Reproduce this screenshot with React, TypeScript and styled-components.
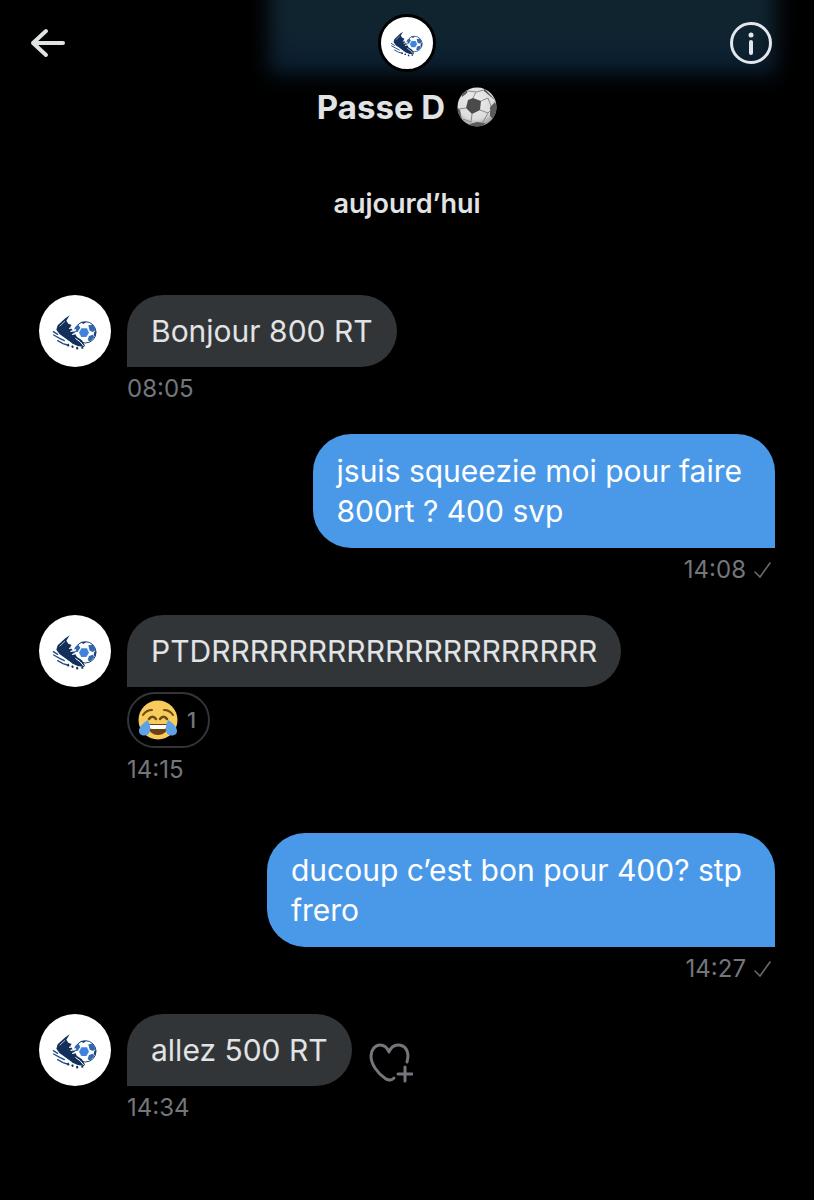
import React from 'react';
import styled, { createGlobalStyle } from 'styled-components';

type Side = 'in' | 'out';

interface ChatMessage {
  id: number;
  side: Side;
  text: string;
  time: string;
  reaction?: number;
  canReact?: boolean;
}

const messages: ChatMessage[] = [
  { id: 1, side: 'in', text: 'Bonjour 800 RT', time: '08:05' },
  { id: 2, side: 'out', text: 'jsuis squeezie moi pour faire\n800rt ? 400 svp', time: '14:08' },
  { id: 3, side: 'in', text: 'PTDRRRRRRRRRRRRRRRRRRRR', time: '14:15', reaction: 1 },
  { id: 4, side: 'out', text: 'ducoup c’est bon pour 400? stp\nfrero', time: '14:27' },
  { id: 5, side: 'in', text: 'allez 500 RT', time: '14:34', canReact: true },
];

const ClubLogo = () => (
  <svg viewBox="27 30 216 216" aria-hidden="true">
    <circle cx="166" cy="142" r="32" fill="#fff" stroke="#1d3f70" strokeWidth="3" />
    <path d="M154 130h17l6 13-8 13h-15l-7-13z" fill="#3f83dc" />
    <path d="M134 127l11-8 6 9-8 13-9-1zM175 121l14-2 8 15-8 7-10-4zM177 153l12-4 4 7-13 14-7-5z" fill="#3168b4" />
    <path d="M151 111h18l-9 6zM193 140l6-2-3 17-5-5z" fill="#1d3f70" />
    <path
      d="M119 91l-13 9-23 21-4 13 10 14 16 11 18 15 20 9 18 3 4-4-9-16-15-10-12-19-8-12 4-5-10-4-6-9z"
      fill="#12305a"
    />
    <path d="M119 130l14-4M123 139l14-4M128 148l13-4" stroke="#fff" strokeWidth="4" strokeLinecap="round" />
    <path d="M89 124l16-15" stroke="#fff" strokeWidth="2" />
    <path d="M92 157l20 9 14 10" stroke="#fff" strokeWidth="3" fill="none" />
    <path d="M136 160l14 10 11 13" stroke="#fff" strokeWidth="3" fill="none" />
    <path d="M113 177l3 7M126 182l3 6M141 186l1 7M156 186l2 5" stroke="#12305a" strokeWidth="6" />
    <path
      d="M70 140l13 8M71 150l18 10 14 7M83 167l16 9 13 4"
      stroke="#1e4f8c"
      strokeWidth="4"
      strokeLinecap="round"
      fill="none"
    />
  </svg>
);

const BackIcon = () => (
  <svg width="36" height="32" viewBox="0 0 36 32" aria-hidden="true">
    <path
      d="M33 16H3M16 4L3 16l13 12"
      fill="none"
      stroke="#e1e3e4"
      strokeWidth="4"
      strokeLinecap="round"
      strokeLinejoin="round"
    />
  </svg>
);

const InfoIcon = () => (
  <svg width="44" height="44" viewBox="0 0 44 44" aria-hidden="true">
    <circle cx="22" cy="22" r="19.5" fill="none" stroke="#e1e7ec" strokeWidth="3" />
    <circle cx="22" cy="14" r="2.5" fill="#e1e7ec" />
    <path d="M22 21v11" stroke="#e1e7ec" strokeWidth="4" strokeLinecap="round" />
  </svg>
);

const BallIcon = () => (
  <svg width="40" height="40" viewBox="0 0 40 40" role="img" aria-label="ballon">
    <defs>
      <radialGradient id="ballShade" cx="45%" cy="35%" r="62%">
        <stop offset="0" stopColor="#ededed" />
        <stop offset="0.75" stopColor="#dcdcdc" />
        <stop offset="1" stopColor="#a5a5a5" />
      </radialGradient>
      <clipPath id="ballClip">
        <circle cx="20" cy="20" r="19.5" />
      </clipPath>
    </defs>
    <circle cx="20" cy="20" r="19.5" fill="url(#ballShade)" />
    <g clipPath="url(#ballClip)">
      <path d="M16 11l8 3-1 9-8 4-6-6 2-8z" fill="#4a4a4a" />
      <path d="M27 1l11 12-4-3-7-6zM33 20l5-5 3 8-5 9-3-3zM13 37l7-2 8 1-2 4H14zM0 20l3 3 2 10-5-3zM4 7l7-5-1 4-5 4z" fill="#5a5a5a" />
      <path
        d="M16 11l3-6M24 14l7-3M23 23l8 3M15 27l-1 8M9 21l-7 1M19 5l-8-1M19 5l8-2M31 11l3 8M31 26l-5 9M31 26l3-3M14 35l-8-3"
        stroke="#8b8b8b"
        strokeWidth="1"
        fill="none"
      />
    </g>
  </svg>
);

const JoyIcon = () => (
  <svg width="42" height="42" viewBox="0 0 42 42" role="img" aria-label="mdr">
    <circle cx="21" cy="21" r="19.5" fill="#f7cb5c" />
    <path d="M6 16c2-3 5-5 9-5M36 16c-2-3-5-5-9-5" stroke="#6b4a16" strokeWidth="2" strokeLinecap="round" fill="none" />
    <path d="M12 20c2-3 5-3 7 0M23 20c2-3 5-3 7 0" stroke="#6b4a16" strokeWidth="2.5" strokeLinecap="round" fill="none" />
    <path d="M11 25h20c0 7-4 11-10 11s-10-4-10-11z" fill="#6b4213" />
    <path d="M12 26h18c0 3-1 4-3 4H15c-2 0-3-1-3-4z" fill="#fff" />
    <path d="M11 21c-3 2-9 6-9 11 0 6 10 6 11 0 1-4-1-8-2-11zM31 21c3 2 9 6 9 11 0 6-10 6-11 0-1-4 1-8 2-11z" fill="#5da2e6" />
  </svg>
);

const CheckIcon = () => (
  <svg width="18" height="18" viewBox="0 0 18 18" aria-hidden="true">
    <path d="M1 11l5 5L16 2" fill="none" stroke="#66696d" strokeWidth="1.6" strokeLinecap="round" />
  </svg>
);

const HeartPlusIcon = () => (
  <svg width="44" height="40" viewBox="0 0 44 40" aria-hidden="true">
    <path
      d="M25 35c-3 3-5 2-8 1C8 30 2 21 2 13 2 7 6 2 11 2c4 0 7 2 9 7 2-5 5-7 9-7 7 0 12 6 9 17"
      fill="none"
      stroke="#73767a"
      strokeWidth="3"
      strokeLinecap="round"
      strokeLinejoin="round"
    />
    <path d="M36 24v14M29 31h14" stroke="#73767a" strokeWidth="3" strokeLinecap="round" />
  </svg>
);

const Message = ({ side, text, time, reaction, canReact }: ChatMessage) => (
  <Row $side={side} $loose={reaction !== undefined}>
    {side === 'in' && (
      <Avatar>
        <ClubLogo />
      </Avatar>
    )}
    <Column $side={side}>
      <BubbleLine>
        <Bubble $side={side}>{text}</Bubble>
        {canReact && (
          <ReactButton aria-label="Ajouter une réaction">
            <HeartPlusIcon />
          </ReactButton>
        )}
      </BubbleLine>
      {reaction !== undefined && (
        <Reaction>
          <JoyIcon />
          <span>{reaction}</span>
        </Reaction>
      )}
      <Meta>
        <time>{time}</time>
        {side === 'out' && <CheckIcon />}
      </Meta>
    </Column>
  </Row>
);

const App = () => {
  return (
    <>
      <GlobalStyle />
      <Page>
        <Header>
          <Glow />
          <IconButton aria-label="Retour">
            <BackIcon />
          </IconButton>
          <Contact>
            <HeaderAvatar>
              <ClubLogo />
            </HeaderAvatar>
            <Title>
              Passe D <BallIcon />
            </Title>
          </Contact>
          <IconButton $end aria-label="Informations">
            <InfoIcon />
          </IconButton>
        </Header>
        <Day>aujourd’hui</Day>
        <Thread>
          {messages.map((message) => (
            <Message key={message.id} {...message} />
          ))}
        </Thread>
      </Page>
    </>
  );
};

export default App;

const GlobalStyle = createGlobalStyle`
  * {
    box-sizing: border-box;
  }
  body {
    margin: 0;
    background-color: #000;
    color: #e1e3e4;
    font-family: Inter, "Liberation Sans", sans-serif;
  }
  svg {
    display: block;
    flex-shrink: 0;
  }
`;

const Page = styled.div`
  min-height: 100vh;
  padding-bottom: 32px;
  overflow: hidden;
`;

const Header = styled.header`
  position: relative;
  display: grid;
  grid-template-columns: 1fr auto 1fr;
  align-items: start;
  height: 142px;
  padding: 14px 30px 0;
`;

/* blurred bubble showing through the translucent bar */
const Glow = styled.div`
  position: absolute;
  top: -40px;
  left: 33%;
  right: 38px;
  height: 114px;
  background: linear-gradient(#102430 60%, #0a1d30);
  filter: blur(10px);
`;

const IconButton = styled.button<{ $end?: boolean }>`
  position: relative;
  display: flex;
  align-items: center;
  justify-self: ${({ $end }) => ($end ? 'end' : 'start')};
  height: 58px;
  padding: ${({ $end }) => ($end ? '0 11px 0 0' : '0')};
  border: none;
  background: none;
  cursor: pointer;
`;

const Contact = styled.div`
  position: relative;
  display: flex;
  flex-direction: column;
  align-items: center;
  gap: 15px;
`;

const HeaderAvatar = styled.div`
  width: 58px;
  height: 58px;
  border: 3px solid #000;
  border-radius: 50%;
  background-color: #fff;
`;

const Title = styled.h1`
  display: flex;
  align-items: center;
  gap: 12px;
  margin: 0;
  font-size: 33px;
  line-height: 40px;
  font-weight: 700;
`;

const Day = styled.h2`
  margin: 42px 0 71px;
  text-align: center;
  font-size: 27px;
  line-height: 40px;
  font-weight: 600;
`;

const Thread = styled.main`
  padding: 0 39px;
`;

const Row = styled.div<{ $side: Side; $loose: boolean }>`
  display: flex;
  justify-content: ${({ $side }) => ($side === 'in' ? 'flex-start' : 'flex-end')};
  gap: 16px;
  margin-bottom: ${({ $loose }) => ($loose ? '49px' : '31px')};
`;

const Avatar = styled.div`
  flex-shrink: 0;
  width: 72px;
  height: 72px;
  border-radius: 50%;
  background-color: #fff;
`;

const Column = styled.div<{ $side: Side }>`
  display: flex;
  flex-direction: column;
  align-items: ${({ $side }) => ($side === 'in' ? 'flex-start' : 'flex-end')};
`;

const BubbleLine = styled.div`
  display: flex;
  align-items: flex-end;
  gap: 17px;
`;

const Bubble = styled.div<{ $side: Side }>`
  padding: ${({ $side }) => ($side === 'in' ? '16px 24px' : '17px 33px 17px 24px')};
  border-radius: ${({ $side }) => ($side === 'in' ? '36px 36px 36px 0' : '38px 38px 0 38px')};
  background-color: ${({ $side }) => ($side === 'in' ? '#323538' : '#4a99e9')};
  color: ${({ $side }) => ($side === 'in' ? '#e1e3e4' : '#fff')};
  font-size: 30px;
  line-height: 40px;
  white-space: pre-line;
`;

const ReactButton = styled.button`
  padding: 0 0 3px;
  border: none;
  background: none;
  cursor: pointer;
`;

const Reaction = styled.button`
  display: flex;
  align-items: center;
  gap: 8px;
  height: 56px;
  margin-top: 5px;
  padding: 0 12px 0 8px;
  border: 2px solid #323538;
  border-radius: 28px;
  background: none;
  color: #73767a;
  font-family: inherit;
  font-size: 22px;
  font-weight: 500;
  cursor: pointer;
`;

const Meta = styled.div`
  display: flex;
  align-items: center;
  gap: 8px;
  margin-top: 8px;
  padding-right: 3px;
  color: #73767a;
  font-size: 24px;
  line-height: 28px;
`;
